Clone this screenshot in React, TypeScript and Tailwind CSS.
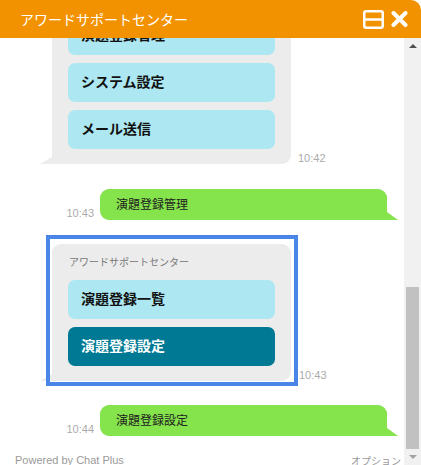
const jp = "font-['Noto_Sans_CJK_JP',sans-serif]";
const num = "font-['Liberation_Sans',Arial,sans-serif]";

const Time = ({ t, className = '' }: { t: string; className?: string }) => (
  <span className={`${num} text-[11px] leading-[11px] text-[#ababab] ${className}`}>{t}</span>
);

const MenuButton = ({ label, active = false }: { label: string; active?: boolean }) => (
  <div
    className={`h-[39px] rounded-[7px] px-[13px] pb-[3px] flex items-center text-[14px] font-bold ${jp} ${
      active ? 'bg-[#007a94] text-white' : 'bg-[#ade8f2] text-[#111]'
    }`}
  >
    {label}
  </div>
);

const BotBubble = ({
  label,
  buttons,
  activeIndex = -1,
}: {
  label?: string;
  buttons: string[];
  activeIndex?: number;
}) => (
  <div className="relative w-[239px] bg-[#ececec] rounded-t-[9px] rounded-br-[9px] pt-[11px] pb-[15px] px-[16px]">
    <div className={`${jp} text-[10px] leading-[14px] text-[#777] mb-[11px] pl-[1px]`}>{label}</div>
    <div className="flex flex-col gap-[8px]">
      {buttons.map((b, i) => (
        <MenuButton key={b} label={b} active={i === activeIndex} />
      ))}
    </div>
    <svg className="absolute left-[-12px] bottom-0" width="12" height="7" viewBox="0 0 12 7">
      <polygon points="0,7 12,0 12,7" fill="#ececec" />
    </svg>
  </div>
);

const UserBubble = ({ text, time }: { text: string; time: string }) => (
  <div className="flex items-end justify-end pr-[17px]">
    <Time t={time} className="mr-[6px] mb-[1px]" />
    <div className="relative w-[287px] h-[31px] bg-[#85e34b] rounded-t-[9px] rounded-bl-[9px] flex items-center pl-[16px] pb-[1px]">
      <span className={`${jp} text-[12px] text-[#222]`}>{text}</span>
      <svg className="absolute right-[-11px] bottom-0" width="11" height="8" viewBox="0 0 11 8">
        <polygon points="0,0 11,8 0,8" fill="#85e34b" />
      </svg>
    </div>
  </div>
);

export default function App() {
  return (
    <div className="w-[421px] h-[465px] bg-white flex flex-col overflow-hidden">
      {/* header */}
      <div className="h-[38px] shrink-0 bg-[#f39200] rounded-tr-[10px] flex items-center pl-[20px] pr-[13px]">
        <span className={`${jp} text-white text-[14px] flex-1`}>アワードサポートセンター</span>
        <svg width="21" height="19" viewBox="0 0 21 19" className="mr-[7px]">
          <rect x="1.25" y="1.25" width="18.5" height="16.5" rx="2" fill="none" stroke="white" strokeWidth="2.5" />
          <line x1="2" y1="9.5" x2="19" y2="9.5" stroke="white" strokeWidth="2.5" />
        </svg>
        <svg width="17" height="16" viewBox="0 0 17 16">
          <path d="M2.5 2 L14.5 14 M14.5 2 L2.5 14" stroke="white" strokeWidth="4" strokeLinecap="round" />
        </svg>
      </div>

      <div className="flex flex-1 min-h-0">
        <div className="flex-1 flex flex-col min-w-0">
          {/* messages */}
          <div className="flex-1 overflow-hidden flex flex-col">
            <div className="flex items-end pl-[52px] mt-[-58px]">
              <BotBubble
                label="アワードサポートセンター"
                buttons={['演題登録管理', 'システム設定', 'メール送信']}
              />
              <Time t="10:42" className="ml-[7px]" />
            </div>

            <div className="mt-[25px]">
              <UserBubble text="演題登録管理" time="10:43" />
            </div>

            <div className="flex items-end pl-[52px] mt-[24px]">
              <div className="relative">
                <BotBubble
                  label="アワードサポートセンター"
                  buttons={['演題登録一覧', '演題登録設定']}
                  activeIndex={1}
                />
                <div className="absolute left-[-6px] right-[-7px] top-[-9px] bottom-[-5px] border-[4px] border-[#4a86e8] pointer-events-none" />
              </div>
              <Time t="10:43" className="ml-[8px]" />
            </div>

            <div className="mt-[24px]">
              <UserBubble text="演題登録設定" time="10:44" />
            </div>
          </div>

          {/* footer */}
          <div className="h-[13px] shrink-0 flex items-start justify-between pl-[15px] pr-[3px]">
            <span className={`${num} text-[11px] leading-[13px] text-[#9a9a9a] mt-[2px]`}>Powered by Chat Plus</span>
            <span className={`${jp} text-[10px] leading-[13px] text-[#9a9a9a] mt-[2px]`}>オプション</span>
          </div>
        </div>

        {/* scrollbar */}
        <div className="w-[17px] shrink-0 bg-[#f1f1f1] flex flex-col items-center">
          <div className="h-[17px] flex items-center justify-center">
            <svg width="8" height="5" viewBox="0 0 8 5">
              <polygon points="4,0 8,4 0,4" fill="#505050" />
            </svg>
          </div>
          <div className="flex-1 w-full px-[2px] flex flex-col">
            <div className="mt-[233px] h-[162px] bg-[#c1c1c1]" />
          </div>
          <div className="h-[17px] flex items-center justify-center">
            <svg width="8" height="5" viewBox="0 0 8 5">
              <polygon points="0,0 8,0 4,4" fill="#a3a3a3" />
            </svg>
          </div>
        </div>
      </div>
    </div>
  );
}
